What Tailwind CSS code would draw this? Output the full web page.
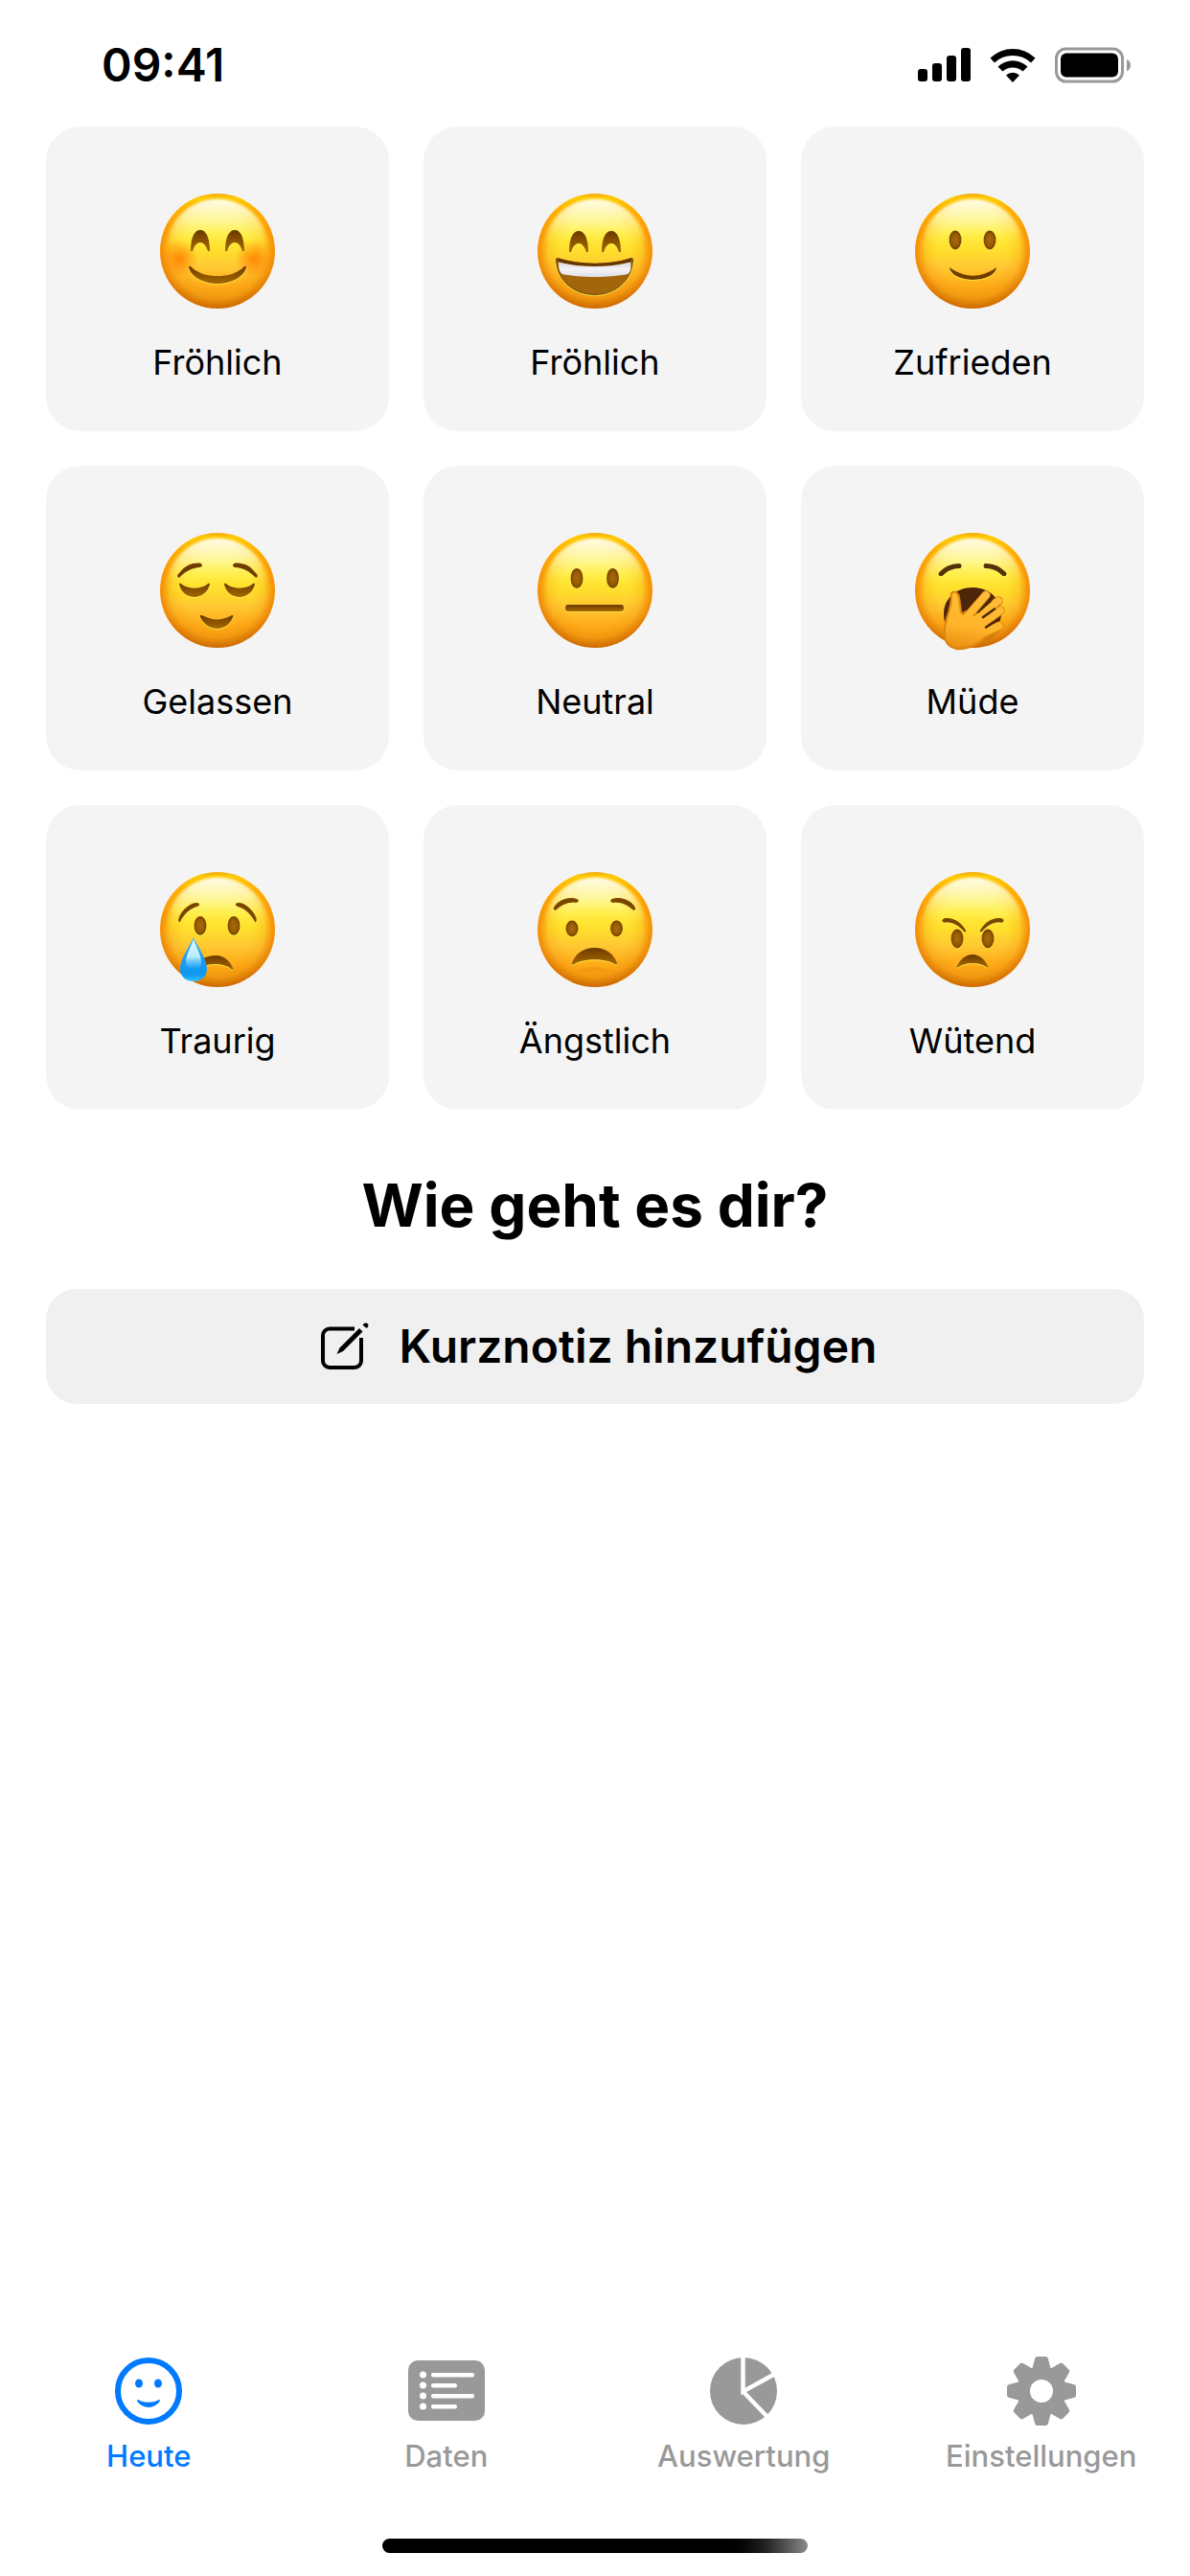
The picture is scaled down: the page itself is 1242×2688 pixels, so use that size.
<!DOCTYPE html>
<html lang="de">
<head>
  <meta charset="UTF-8">
  <meta name="viewport" content="width=device-width, initial-scale=1">
  <title>Heute</title>
  <script src="https://cdn.jsdelivr.net/npm/@tailwindcss/browser@4"></script>
</head>
<body class="bg-white text-black font-['Inter',sans-serif] min-h-screen flex flex-col">

  <!-- Gemeinsame Formen und Verläufe -->
  <svg class="absolute w-0 h-0" aria-hidden="true">
    <defs>
      <linearGradient id="rim" x1="0" y1="0" x2="0" y2="1">
        <stop offset="0" stop-color="#f5a80c"/>
        <stop offset=".04" stop-color="#ffcb00"/>
        <stop offset=".14" stop-color="#ffb000"/>
        <stop offset=".35" stop-color="#fb9607"/>
        <stop offset=".7" stop-color="#ee8c0a"/>
        <stop offset="1" stop-color="#cf6c02"/>
      </linearGradient>
      <linearGradient id="skin" x1="0" y1="0" x2="0" y2="1">
        <stop offset="0" stop-color="#fffbd0"/>
        <stop offset=".2" stop-color="#fff683"/>
        <stop offset=".36" stop-color="#ffec3c"/>
        <stop offset=".5" stop-color="#ffde2c"/>
        <stop offset=".64" stop-color="#ffc832"/>
        <stop offset=".8" stop-color="#ffad19"/>
        <stop offset="1" stop-color="#f0990f"/>
      </linearGradient>
      <radialGradient id="fade" gradientUnits="userSpaceOnUse" cx="60" cy="61" r="58">
        <stop offset=".62" stop-color="#fff"/>
        <stop offset=".84" stop-color="#fff" stop-opacity=".75"/>
        <stop offset="1" stop-color="#fff" stop-opacity="0"/>
      </radialGradient>
      <linearGradient id="shine" x1="0" y1="0" x2="0" y2="1">
        <stop offset="0" stop-color="#fffef2" stop-opacity=".95"/>
        <stop offset=".16" stop-color="#fffbc0" stop-opacity=".7"/>
        <stop offset=".45" stop-color="#fff25a" stop-opacity="0"/>
      </linearGradient>
      <linearGradient id="brown" x1="0" y1="0" x2="0" y2="1">
        <stop offset="0" stop-color="#6a3800"/>
        <stop offset=".5" stop-color="#8b5303"/>
        <stop offset="1" stop-color="#a46807"/>
      </linearGradient>
      <radialGradient id="eye">
        <stop offset="0" stop-color="#a86a0a"/>
        <stop offset=".6" stop-color="#995c05"/>
        <stop offset="1" stop-color="#733f00"/>
      </radialGradient>
      <radialGradient id="blush">
        <stop offset="0" stop-color="#ff7a00" stop-opacity=".85"/>
        <stop offset="1" stop-color="#ff7a00" stop-opacity="0"/>
      </radialGradient>
      <linearGradient id="teeth" x1="0" y1="0" x2="0" y2="1">
        <stop offset="0" stop-color="#d8dae0"/>
        <stop offset=".5" stop-color="#f4f4f8"/>
        <stop offset="1" stop-color="#dcdee4"/>
      </linearGradient>
      <linearGradient id="hand" gradientUnits="userSpaceOnUse" x1="60" y1="60" x2="50" y2="121">
        <stop offset="0" stop-color="#ffbf3a"/>
        <stop offset=".6" stop-color="#ffb52a"/>
        <stop offset="1" stop-color="#ec8f12"/>
      </linearGradient>
      <linearGradient id="tear" x1="0" y1="0" x2="0" y2="1">
        <stop offset="0" stop-color="#4db4ec"/>
        <stop offset=".5" stop-color="#1d9cf0"/>
        <stop offset=".85" stop-color="#0f98f2"/>
        <stop offset="1" stop-color="#35c4ff"/>
      </linearGradient>
      <linearGradient id="tearShine" x1="0" y1="0" x2="0" y2="1">
        <stop offset="0" stop-color="#e8fbff"/>
        <stop offset=".6" stop-color="#b4ecff"/>
        <stop offset="1" stop-color="#5fc6ff" stop-opacity=".1"/>
      </linearGradient>
      <mask id="soft"><circle cx="60" cy="60" r="60" fill="url(#fade)"/></mask>
      <filter id="glow" x="-20%" y="-20%" width="140%" height="140%">
        <feDropShadow dx="0" dy="1" stdDeviation=".7" flood-color="#fff04a" flood-opacity=".7"/>
      </filter>
      <filter id="blur1"><feGaussianBlur stdDeviation=".8"/></filter>

      <g id="face">
        <circle cx="60" cy="60" r="60" fill="url(#rim)"/>
        <circle cx="60" cy="60" r="60" fill="url(#skin)" mask="url(#soft)"/>
        <ellipse cx="60" cy="59" rx="53" ry="53" fill="url(#shine)" filter="url(#blur1)"/>
      </g>
      <path id="arch" fill="url(#brown)" d="M32 59C32 46 36 38 42 38C48 38 52 46 52 59C52 61 50 61 49.500 59C48 54 45 51 42 51C39 51 36 54 34.500 59C34 61 32 61 32 59Z"/>
      <path id="browCalm" fill="#6f3c00" d="M19 46.500C17 45 19 43 21 41C26 34 34 31 41 31.500C45 32 45 36 41 36C33 37 27 40 21 46Q20 47.500 19 46.500Z"/>
      <path id="lid" fill="url(#brown)" d="M20 54C20 52 22 53 23 54C31 59 41 59 49 54C50 53 52 52 52 54C50 62 43 67 36 67C28 67 22 62 20 54Z"/>
      <path id="browSad" fill="#7a4500" d="M20 52C18 51 20 46 22 43C27 36 33 32 38 32C42 32 42 35 39 36C32 38 27 42 22 50Q21 53 20 52Z"/>
      <path id="browWorry" fill="#7a4500" d="M17 39C16 37 19 34 21 32C27 27 36 26 41 28C44 29 43 32 40 32C32 31 26 34 20 39Q18 41 17 39Z"/>
      <path id="browAngry" fill="#7a4500" d="M29 52C27 50 30 48 33 48C43 48 50 55 53 61C54 63 52 63 51 62C46 56 39 52 33 52.500C31 53 30 53 29 52Z"/>
      <path id="tooth" d="M-10 -22L-7 -33.500Q-6.500 -36 -4.500 -36H4.500Q6.500 -36 7 -33.500L10 -22Z"/>
    </defs>
  </svg>

  <header class="flex items-center justify-between h-[132px] pt-11 pb-10 pl-[106px] pr-[61px]">
    <time class="text-[48px] leading-12 font-semibold">09:41</time>
    <div class="flex items-center gap-5">
      <svg class="w-[55px] h-9" viewBox="0 0 55 36" aria-hidden="true">
        <rect x="0" y="22" width="10" height="13" rx="3"/>
        <rect x="15" y="16" width="10" height="19" rx="3"/>
        <rect x="30" y="8" width="10" height="27" rx="3"/>
        <rect x="45" y="0" width="10" height="35" rx="3"/>
      </svg>
      <svg class="w-12 h-9" viewBox="0 0 48 36" aria-hidden="true">
        <path d="M.5 10.500A34 34 0 0 1 47.500 10.500L43 15.500A27.500 27.500 0 0 0 5 15.500Z"/>
        <path d="M8.500 19.500A22.500 22.500 0 0 1 39.500 19.500L34.500 24.500A15.500 15.500 0 0 0 13.500 24.500Z"/>
        <path d="M17 28.500A10.500 10.500 0 0 1 31 28.500L24 36Z"/>
      </svg>
      <svg class="w-20 h-[38px]" viewBox="0 0 80 38" aria-hidden="true">
        <rect x="1.500" y="2" width="69" height="34" rx="10" fill="none" stroke="#999" stroke-width="3"/>
        <rect x="6" y="6.500" width="60" height="25" rx="6"/>
        <path d="M75 13Q79 14.500 79 19Q79 23.500 75 25.500Z" fill="#999"/>
      </svg>
    </div>
  </header>

  <main class="px-12">
    <div class="grid grid-cols-3 gap-9">
      <button type="button" class="flex flex-col items-center gap-8 pt-[70px] pb-12 rounded-[36px] bg-[#f4f4f4]">
        <svg class="w-30 h-30 overflow-visible" viewBox="0 0 120 120" aria-hidden="true">
          <use href="#face"/>
          <circle cx="20" cy="68" r="20" fill="url(#blush)"/>
          <circle cx="98" cy="68" r="20" fill="url(#blush)"/>
          <g filter="url(#glow)">
            <use href="#arch"/>
            <use href="#arch" x="36"/>
            <path fill="url(#brown)" d="M30 77C30 75 32 76 33 77C41 84 50 86 60 86C70 86 79 84 87 77C88 76 90 75 90 77C88 86 76 94 60 94C44 94 32 86 30 77Z"/>
          </g>
        </svg>
        <span class="text-[36px] leading-12">Fröhlich</span>
      </button>

      <button type="button" class="flex flex-col items-center gap-8 pt-[70px] pb-12 rounded-[36px] bg-[#f4f4f4]">
        <svg class="w-30 h-30 overflow-visible" viewBox="0 0 120 120" aria-hidden="true">
          <use href="#face"/>
          <g filter="url(#glow)">
            <use href="#arch" x="1" y="1"/>
            <use href="#arch" x="35" y="1"/>
            <path fill="#a2660a" stroke="#6a3a00" stroke-width="1" d="M19.500 69C19.500 67 21 67.500 23 68C45 75 75 75 96 68C99 67 100 67.500 99.500 70C98 92 80 105.500 60 105.500C39 105.500 20.500 92 19.500 69Z"/>
          </g>
          <path fill="none" stroke="#683600" stroke-width="3" d="M21 69.500C45 76 75 76 98 69.500"/>
          <path fill="url(#teeth)" d="M22 71.500C45 77.500 74 77.500 97 71.500C98 78 97 82 94 84C75 88 44 88 26 84C23 82 22 78 22 71.500Z"/>
        </svg>
        <span class="text-[36px] leading-12">Fröhlich</span>
      </button>

      <button type="button" class="flex flex-col items-center gap-8 pt-[70px] pb-12 rounded-[36px] bg-[#f4f4f4]">
        <svg class="w-30 h-30 overflow-visible" viewBox="0 0 120 120" aria-hidden="true">
          <use href="#face"/>
          <g filter="url(#glow)">
            <ellipse cx="42" cy="48.500" rx="6.500" ry="10" fill="url(#eye)"/>
            <ellipse cx="78" cy="48.500" rx="6.500" ry="10" fill="url(#eye)"/>
            <path fill="#6f3c00" d="M36 78.500C36 77 37 77 38 78.500C52 88 69 88 83 78.500C84 77 85 77 85 78.500C82 86 72 90 60.500 90C49 90 39 86 36 78.500Z"/>
          </g>
        </svg>
        <span class="text-[36px] leading-12">Zufrieden</span>
      </button>

      <button type="button" class="flex flex-col items-center gap-8 pt-[70px] pb-12 rounded-[36px] bg-[#f4f4f4]">
        <svg class="w-30 h-30 overflow-visible" viewBox="0 0 120 120" aria-hidden="true">
          <use href="#face"/>
          <g filter="url(#glow)">
            <use href="#browCalm"/>
            <use href="#browCalm" transform="translate(120) scale(-1 1)"/>
            <use href="#lid"/>
            <use href="#lid" x="47"/>
            <path fill="url(#brown)" d="M42 88C41 85 44 86 46 87C55 91.500 64 91.500 73 87C75 86 77 85 76 88C74 95 67 100 59.500 100C52 100 45 95 42 88Z"/>
          </g>
        </svg>
        <span class="text-[36px] leading-12">Gelassen</span>
      </button>

      <button type="button" class="flex flex-col items-center gap-8 pt-[70px] pb-12 rounded-[36px] bg-[#f4f4f4]">
        <svg class="w-30 h-30 overflow-visible" viewBox="0 0 120 120" aria-hidden="true">
          <use href="#face"/>
          <g filter="url(#glow)">
            <ellipse cx="41" cy="47.500" rx="6.500" ry="10.500" fill="url(#eye)"/>
            <ellipse cx="78.500" cy="47.500" rx="6.500" ry="10.500" fill="url(#eye)"/>
            <rect x="29" y="75" width="61" height="7" rx="3" fill="url(#brown)"/>
          </g>
        </svg>
        <span class="text-[36px] leading-12">Neutral</span>
      </button>

      <button type="button" class="flex flex-col items-center gap-8 pt-[70px] pb-12 rounded-[36px] bg-[#f4f4f4]">
        <svg class="w-30 h-30 overflow-visible" viewBox="0 0 120 120" aria-hidden="true">
          <use href="#face"/>
          <g fill="none" stroke="#553010" stroke-width="5" stroke-linecap="round" filter="url(#glow)">
            <path d="M27 43Q34 35 46 34.500"/>
            <path d="M93 43Q86 35 74 34.500"/>
          </g>
          <path fill="#4b2609" d="M30 84C30 68 44 57 60 57C76 57 90 68 90 84C90 96 82 104 70 106L36 106Q30 96 30 84Z"/>
          <path fill="#c46c08" opacity=".6" d="M60 119Q78 115 90 101L78 104Z" filter="url(#blur1)"/>
          <!-- Hand: dunkle Kontur, darüber die helle Füllung -->
          <g stroke="#dd860f" stroke-linecap="round" stroke-linejoin="round" fill="#dd860f">
            <path stroke-width="2" d="M38 63C40 60 45 62 46 67L48 82Q49 86 53 82L76 90L78 104Q72 114 60 118Q50 122 43 121Q32 119 31 108C30 98 32 92 34 86Q38 76 38 63Z"/>
            <path stroke-width="9.500" d="M54 88L74 65M62 92L87 71M66 98L89 81M66 107L88 97"/>
          </g>
          <g stroke="url(#hand)" stroke-linecap="round" stroke-linejoin="round" fill="url(#hand)">
            <path stroke="none" d="M39 64C41 61 44 63 45 68L47 83Q49 88 54 84L74 92L76 103Q71 112 59 117Q50 120 43 119Q33 117 32 107C31 98 34 92 35 86Q39 76 39 64Z"/>
            <path stroke-width="7.500" d="M54 88L74 65M62 92L87 71M66 98L89 81M66 107L88 97"/>
            <path stroke-width="14" d="M52 94L64 103"/>
          </g>
          <g stroke="#4b2609" stroke-width="2.500" stroke-linecap="round">
            <path d="M71 88L83 79.500M74 98.500L86 91"/>
            <path stroke-width="1.500" d="M66 83L79 71.500"/>
          </g>
        </svg>
        <span class="text-[36px] leading-12">Müde</span>
      </button>

      <button type="button" class="flex flex-col items-center gap-8 pt-[70px] pb-12 rounded-[36px] bg-[#f4f4f4]">
        <svg class="w-30 h-30 overflow-visible" viewBox="0 0 120 120" aria-hidden="true">
          <use href="#face"/>
          <g filter="url(#glow)">
            <use href="#browSad"/>
            <use href="#browSad" transform="translate(120) scale(-1 1)"/>
            <ellipse cx="42" cy="56" rx="6.500" ry="10" fill="url(#eye)"/>
            <ellipse cx="77" cy="56" rx="6.500" ry="10" fill="url(#eye)"/>
            <path fill="url(#brown)" d="M76 100C77 103 74 102 73 100C65 95 53 95 46 98L44 91C48 88 54 87 59 87C67 87 74 94 76 100Z"/>
          </g>
          <path fill="url(#tear)" d="M35 68C37 74 49 90 49 101C49 109 43 114 35 114C27 114 21 109 21 101C21 90 33 74 35 68Z"/>
          <path fill="url(#tearShine)" d="M35 70C37 77 43 86 43 94C43 99 39 101 35 101C31 101 27 99 27 94C27 86 33 77 35 70Z"/>
        </svg>
        <span class="text-[36px] leading-12">Traurig</span>
      </button>

      <button type="button" class="flex flex-col items-center gap-8 pt-[70px] pb-12 rounded-[36px] bg-[#f4f4f4]">
        <svg class="w-30 h-30 overflow-visible" viewBox="0 0 120 120" aria-hidden="true">
          <use href="#face"/>
          <path fill="#ee8a08" opacity=".7" d="M43 105C50 98 69 98 76 105C68 102 51 102 43 105Z" filter="url(#blur1)"/>
          <g filter="url(#glow)">
            <use href="#browWorry"/>
            <use href="#browWorry" transform="translate(119) scale(-1 1)"/>
            <ellipse cx="36" cy="59" rx="6.500" ry="8.500" fill="url(#eye)"/>
            <ellipse cx="82.500" cy="59" rx="6.500" ry="8.500" fill="url(#eye)"/>
            <path fill="url(#brown)" d="M36 95C39 86 47 79 59.500 79C72 79 80 86 83 95C84 97 81 97 79 95C68 90 51 90 40 95C38 97 35 97 36 95Z"/>
          </g>
        </svg>
        <span class="text-[36px] leading-12">Ängstlich</span>
      </button>

      <button type="button" class="flex flex-col items-center gap-8 pt-[70px] pb-12 rounded-[36px] bg-[#f4f4f4]">
        <svg class="w-30 h-30 overflow-visible" viewBox="0 0 120 120" aria-hidden="true">
          <use href="#face"/>
          <g filter="url(#glow)">
            <ellipse cx="44" cy="69.500" rx="6.500" ry="10" fill="url(#eye)"/>
            <ellipse cx="76" cy="69.500" rx="6.500" ry="10" fill="url(#eye)"/>
            <use href="#browAngry"/>
            <use href="#browAngry" transform="translate(121) scale(-1 1)"/>
            <path fill="url(#brown)" d="M44 98C47 91 53 86 60 86C67 86 73 91 76 98C77 100 75 100 73 98C65 94 55 94 47 98C45 100 43 100 44 98Z"/>
          </g>
        </svg>
        <span class="text-[36px] leading-12">Wütend</span>
      </button>
    </div>

    <h1 class="mt-15 text-[62px] leading-20 font-bold text-center">Wie geht es dir?</h1>

    <button type="button" class="mt-[47px] w-full h-30 pl-2 flex items-center justify-center gap-8 rounded-[32px] bg-[#f0f0f0] text-[48px] font-semibold">
      <svg class="w-[50px] h-[50px]" viewBox="0 0 50 50" fill="none" stroke="#000" stroke-width="4" aria-hidden="true">
        <path d="M35 6.500H9A7 7 0 0 0 2 13.500V40A7 7 0 0 0 9 47H35A7 7 0 0 0 42 40V16"/>
        <path d="M16.500 33L19.500 26.500L40 6L43.500 9.500L23 30Z" fill="#000" stroke="none"/>
        <path d="M44.500 1.500L46 .5Q47.500 0 49 1.500Q50 3 49 4.500L47.500 6L43.500 2.500Z" fill="#000" stroke="none"/>
      </svg>
      Kurznotiz hinzufügen
    </button>
  </main>

  <footer class="mt-auto flex flex-col items-center pb-6">
    <nav class="w-full grid grid-cols-4 text-[31px] leading-10 font-medium text-[#999]">
      <a href="#heute" aria-current="page" class="flex flex-col items-center gap-3 text-[#007aff]">
        <svg class="h-18 w-[70px]" viewBox="0 0 70 72" fill="currentColor" aria-hidden="true">
          <circle cx="35" cy="36" r="32" fill="none" stroke="currentColor" stroke-width="6"/>
          <ellipse cx="25" cy="28" rx="4" ry="4.500"/>
          <ellipse cx="45" cy="28" rx="4" ry="4.500"/>
          <path d="M23 46C23 45 24 44.500 25 45.500C31 48.500 39 48.500 45 45.500C46 44.500 47 45 47 46C45 50 40 53 35 53C30 53 25 50 23 46Z"/>
        </svg>
        Heute
      </a>
      <a href="#daten" class="flex flex-col items-center gap-3">
        <svg class="h-18 w-20" viewBox="0 0 80 72" aria-hidden="true">
          <rect x="0" y="4" width="80" height="63" rx="10" fill="currentColor"/>
          <g fill="#fff">
            <circle cx="15.500" cy="19" r="3.500"/>
            <circle cx="15.500" cy="30" r="3.500"/>
            <circle cx="15.500" cy="41" r="3.500"/>
            <circle cx="15.500" cy="52" r="3.500"/>
            <rect x="24" y="17" width="45" height="4.500" rx="2"/>
            <rect x="24" y="28" width="27" height="4.500" rx="2"/>
            <rect x="24" y="39" width="45" height="4.500" rx="2"/>
            <rect x="24" y="50" width="27" height="4.500" rx="2"/>
          </g>
        </svg>
        Daten
      </a>
      <a href="#auswertung" class="flex flex-col items-center gap-3">
        <svg class="h-18 w-[70px]" viewBox="0 0 70 72" aria-hidden="true">
          <circle cx="35" cy="36" r="35" fill="currentColor"/>
          <path d="M34.500 0V36.500L68 18M34.500 36.500L60 63" fill="none" stroke="#fff" stroke-width="4.500"/>
        </svg>
        Auswertung
      </a>
      <a href="#einstellungen" class="flex flex-col items-center gap-3">
        <svg class="h-18 w-18" viewBox="-36 -36 72 72" fill="currentColor" aria-hidden="true">
          <circle r="26"/>
          <use href="#tooth"/>
          <use href="#tooth" transform="rotate(45)"/>
          <use href="#tooth" transform="rotate(90)"/>
          <use href="#tooth" transform="rotate(135)"/>
          <use href="#tooth" transform="rotate(180)"/>
          <use href="#tooth" transform="rotate(225)"/>
          <use href="#tooth" transform="rotate(270)"/>
          <use href="#tooth" transform="rotate(315)"/>
          <circle r="12" fill="#fff"/>
        </svg>
        Einstellungen
      </a>
    </nav>
    <div class="mt-[66px] w-[444px] h-[15px] rounded-full bg-linear-to-r from-black from-80% via-[#222] via-90% to-[#8c8c8c]"></div>
  </footer>
</body>
</html>
